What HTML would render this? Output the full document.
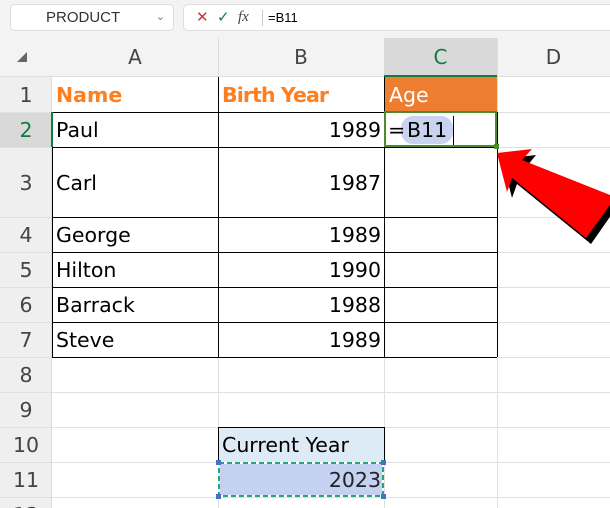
<!DOCTYPE html><html><head><style>
body{margin:0;width:610px;height:508px;overflow:hidden;background:#f3f3f3;font-family:"Liberation Sans",sans-serif;position:relative}
.a{position:absolute;box-sizing:border-box}
.t{font-family:"DejaVu Sans","Liberation Sans",sans-serif;font-size:20px;line-height:35px}
</style></head><body>
<div class="a" style="left:10px;top:4px;width:164px;height:27px;background:#fff;border:1px solid #ddd;border-radius:5px;font-size:15px;color:#333;line-height:25px;padding-left:35px">PRODUCT<span style="position:absolute;right:8px;color:#777;font-size:11px">⌄</span></div>
<div class="a" style="left:183px;top:4px;width:440px;height:27px;background:#fff;border:1px solid #ddd;border-radius:5px;line-height:25px;font-size:13px">
<span style="position:absolute;left:12px;color:#d13438;font-size:15px">✕</span><span style="position:absolute;left:33px;color:#107c41;font-size:15px">✓</span><span style="position:absolute;left:54px;font-family:'Liberation Serif';font-style:italic;font-size:15px;color:#444">fx</span><span style="position:absolute;left:78px;top:5px;height:16px;border-left:1px solid #ccc"></span><span style="position:absolute;left:84px;color:#000">=B11</span></div>
<div class="a" style="left:0;top:38px;width:610px;height:470px;background:#fff"></div>
<div class="a" style="left:0;top:38px;width:610px;height:39px;background:#f3f3f3;border-bottom:1px solid #ddd"></div>
<div class="a" style="left:384px;top:38px;width:113px;height:39px;background:#d9d9d9;border-bottom:2px solid #107c41"></div>
<div class="a" style="left:17px;top:52px;width:0;height:0;border-left:10px solid transparent;border-bottom:10px solid #666"></div>
<div class="a t" style="left:52px;top:40px;width:166px;text-align:center;color:#444">A</div>
<div class="a t" style="left:218px;top:40px;width:166px;text-align:center;color:#444">B</div>
<div class="a t" style="left:384px;top:40px;width:113px;text-align:center;color:#107c41">C</div>
<div class="a t" style="left:497px;top:40px;width:113px;text-align:center;color:#444">D</div>
<div class="a" style="left:218px;top:38px;height:39px;border-left:1px solid #ddd"></div>
<div class="a" style="left:497px;top:38px;height:39px;border-left:1px solid #ddd"></div>
<div class="a" style="left:0;top:77px;width:52px;height:431px;background:#efefef;border-right:1px solid #ddd"></div>
<div class="a" style="left:0;top:112px;width:52px;height:35px;background:#d9d9d9"></div>
<svg class="a" style="left:0;top:0" width="610" height="508">
<g stroke="#e0e0e0" stroke-width="1">
<line x1="0" y1="112.5" x2="610" y2="112.5"/><line x1="0" y1="147.5" x2="610" y2="147.5"/><line x1="0" y1="217.5" x2="610" y2="217.5"/><line x1="0" y1="252.5" x2="610" y2="252.5"/><line x1="0" y1="287.5" x2="610" y2="287.5"/><line x1="0" y1="322.5" x2="610" y2="322.5"/><line x1="0" y1="357.5" x2="610" y2="357.5"/><line x1="0" y1="392.5" x2="610" y2="392.5"/><line x1="0" y1="427.5" x2="610" y2="427.5"/><line x1="0" y1="462.5" x2="610" y2="462.5"/><line x1="0" y1="497.5" x2="610" y2="497.5"/>
<line x1="218.5" y1="77" x2="218.5" y2="508"/><line x1="384.5" y1="77" x2="384.5" y2="508"/><line x1="497.5" y1="77" x2="497.5" y2="508"/>
</g>
<rect x="384" y="77" width="113" height="35" fill="#ed7d31"/>
<rect x="218" y="427" width="166" height="35" fill="#ddebf7"/>
<rect x="218" y="462" width="166" height="35" fill="#c5d1f0"/>
<g stroke="#000" stroke-width="1" fill="none">
<line x1="52" y1="112.5" x2="497" y2="112.5"/><line x1="52" y1="147.5" x2="497" y2="147.5"/><line x1="52" y1="217.5" x2="497" y2="217.5"/><line x1="52" y1="252.5" x2="497" y2="252.5"/><line x1="52" y1="287.5" x2="497" y2="287.5"/><line x1="52" y1="322.5" x2="497" y2="322.5"/><line x1="52" y1="357.5" x2="497" y2="357.5"/>
<line x1="52.5" y1="112" x2="52.5" y2="357"/><line x1="218.5" y1="77" x2="218.5" y2="357"/><line x1="384.5" y1="77" x2="384.5" y2="357"/><line x1="497.5" y1="112" x2="497.5" y2="357"/>
<rect x="218.5" y="427.5" width="166" height="35"/>
</g>
<line x1="52" y1="112" x2="52" y2="147" stroke="#107c41" stroke-width="2"/>
<rect x="385" y="112" width="111" height="34" fill="#fff" stroke="#4c8c2c" stroke-width="2"/>
<rect x="494" y="144" width="5" height="5" fill="#4c8c2c"/>
<rect x="401" y="116" width="52" height="28" rx="12" fill="#c8d3ef"/>
<line x1="453.5" y1="116" x2="453.5" y2="145" stroke="#000"/>
<rect x="219" y="463" width="164" height="33" fill="none" stroke="#fff" stroke-width="2"/>
<rect x="219" y="463" width="164" height="33" fill="none" stroke="#1fa67a" stroke-width="2" stroke-dasharray="5 3"/>
<g fill="#4472c4"><rect x="216" y="460" width="5" height="5"/><rect x="381" y="460" width="5" height="5"/><rect x="216" y="494" width="5" height="5"/><rect x="381" y="494" width="5" height="5"/></g>
<polygon points="502,159 536,155 527,166 614,201 614,211 591,244 517,184 512,198" fill="#000"/>
<polygon points="497,153 532,149 522,160 610,195 610,205 586,238 512,178 507,192" fill="#f00"/>
<g font-family="DejaVu Sans,Liberation Sans,sans-serif" font-size="20.5">
<text x="56" y="102" fill="#ff7f1f" font-weight="bold">Name</text>
<text x="222" y="102" fill="#ff7f1f" font-weight="bold" textLength="107">Birth Year</text>
<text x="389" y="102" fill="#fff">Age</text>
<text x="56" y="137">Paul</text><text x="56" y="190">Carl</text><text x="56" y="242">George</text><text x="56" y="277">Hilton</text><text x="56" y="312">Barrack</text><text x="56" y="347">Steve</text>
<g text-anchor="end"><text x="381" y="137">1989</text><text x="381" y="190">1987</text><text x="381" y="242">1989</text><text x="381" y="277">1990</text><text x="381" y="312">1988</text><text x="381" y="347">1989</text><text x="381" y="487" fill="#222">2023</text></g>
<text x="388" y="137">=</text><text x="407" y="137">B11</text>
<text x="222" y="452">Current Year</text>
<g text-anchor="middle" fill="#444"><text x="26" y="102">1</text><text x="26" y="137" fill="#107c41">2</text><text x="26" y="190">3</text><text x="26" y="242">4</text><text x="26" y="277">5</text><text x="26" y="312">6</text><text x="26" y="347">7</text><text x="26" y="382">8</text><text x="26" y="417">9</text><text x="26" y="452">10</text><text x="26" y="487">11</text><text x="26" y="522">12</text></g>
</g>
</svg>
</body></html>
